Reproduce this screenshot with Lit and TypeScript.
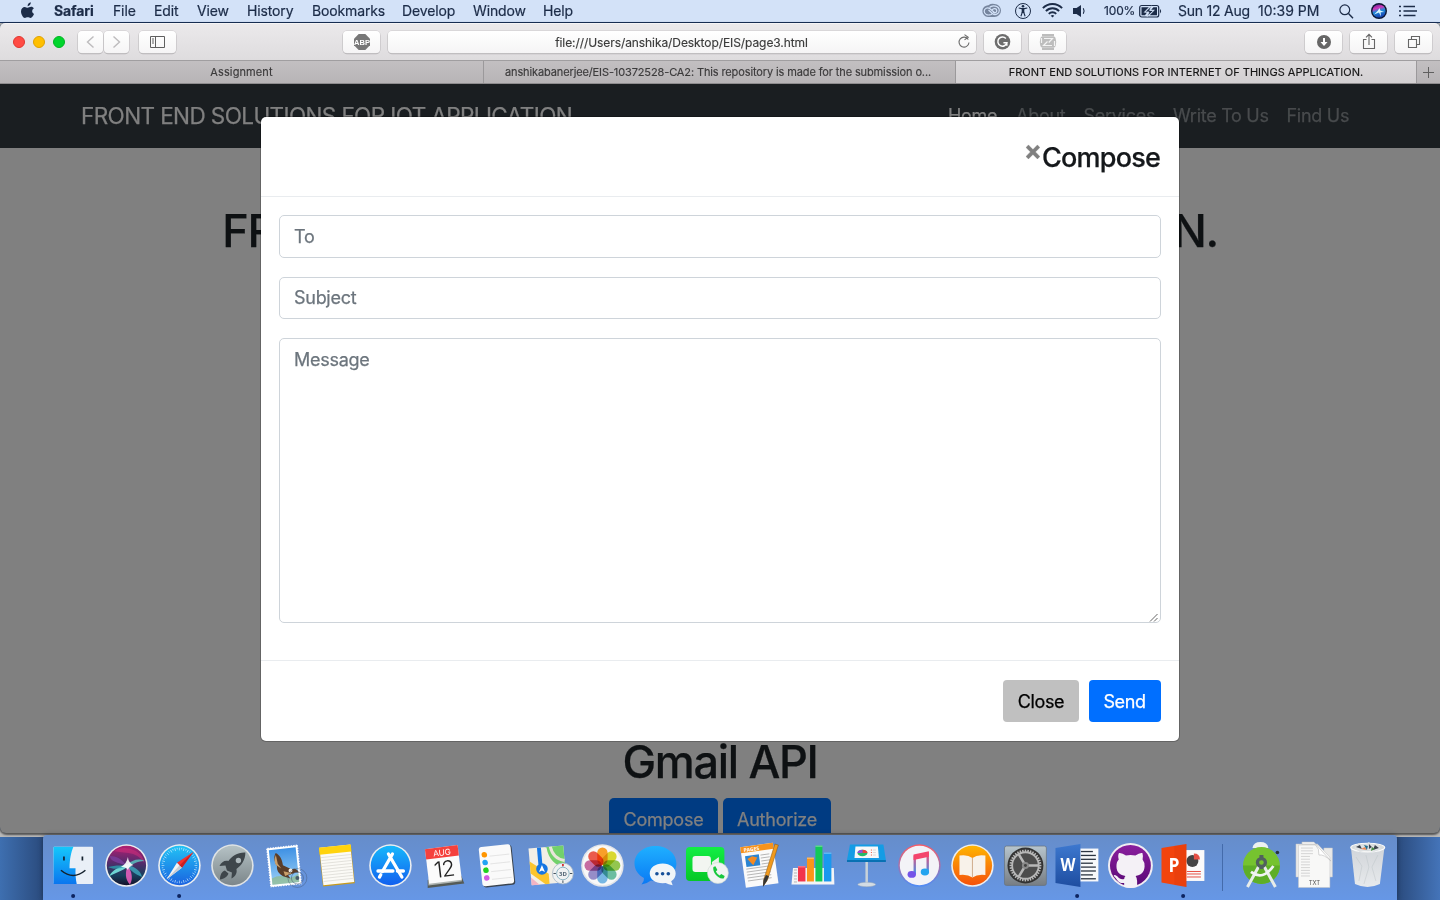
import { LitElement, html, svg, css } from "lit";
import { customElement } from "lit/decorators.js";

const range = (n: number) => Array.from({ length: n }, (_, i) => i);

@customElement("mac-menubar")
class MacMenubar extends LitElement {
  static styles = css`
    :host { display: block; }
    .bar {
      display: grid; height: 22px; box-sizing: content-box;
      grid-template-columns: 54px 59px 41px 43px 50px 65px 90px 71px 70px 439px 32px 28px 30px 32px 35px 39px 80px 80px 32px 28px 1fr;
      background: #d3e2f8; border-bottom: 1px solid #1b3560;
      font: 14px/22px Inter, sans-serif; color: #1c2c48; white-space: nowrap; letter-spacing: -0.14px;
      -webkit-text-stroke: 0.2px #1c2c48;
    }
    .app { font-weight: 700; letter-spacing: -0.1px; }
    .pct { font-size: 12px; letter-spacing: -0.15px; }
    .date { letter-spacing: -0.22px; }
    .time { letter-spacing: 0; }
    svg { display: block; height: 22px; }
  `;
  render() {
    return html`<div class="bar">
      <svg width="54" viewBox="0 0 54 22"><path fill="#1c2c48" d="M27.6 6.2c-.1-2 1.400-3.700 3.200-3.900.2 2-1.500 3.900-3.200 3.900zM34 13.900c-.6 1.500-2 4-3.500 4-1 0-1.500-.7-2.800-.7s-1.800.7-2.800.7c-1.700 0-3.900-3.700-3.900-6.500 0-3 1.900-4.500 3.700-4.500 1.200 0 2.100.8 3 .8.8 0 2-.9 3.400-.9 1.200 0 2.200.6 2.800 1.500-2.400 1.500-2.200 4.500.1 5.600z"/></svg>
      <span class="app">Safari</span><span>File</span><span>Edit</span><span>View</span><span>History</span>
      <span>Bookmarks</span><span>Develop</span><span>Window</span><span>Help</span>
      <svg width="32" viewBox="0 0 32 22"><path d="M6.500 5.200A7 7 0 0 1 12.500 4a6.500 6.500 0 0 1 0 13H6A5.900 5.900 0 0 1 6.500 5.200z" fill="#76859e"/><g fill="none" stroke="#d3e2f8" stroke-width="1.200"><path d="M10.500 13.500l-1.300 1c-4 1.400-7-.3-7-3.200s3.300-4.300 5.800-2.600l5 4.300"/><path d="M7.500 7.500c3-3.200 9.800-1.500 9.800 3 0 3.500-4.300 5.300-6.800 3L6.500 10"/><path d="M9.800 10.300c1.800-2.600 5-1.800 5 .5 0 2-2.300 2.600-3.600 1.200"/></g></svg>
      <svg width="28" viewBox="0 0 28 22"><circle cx="9" cy="11" r="7.500" fill="none" stroke="#1c2c48" stroke-width="1"/><circle cx="9" cy="6.300" r="1.300" fill="#1c2c48"/><path d="M4.700 8l3 .6h2.600l3-.6M8.400 12l-1.500 4.200M9.600 12l1.500 4.200" stroke="#1c2c48" stroke-width="1.100" fill="none"/><path d="M7.700 8.200h2.600V13H7.700z" fill="#1c2c48"/></svg>
      <svg width="30" viewBox="0 0 30 22"><g fill="none" stroke="#1c2c48" stroke-width="1.900"><path d="M.9 8.200a13 13 0 0 1 19.200 0M3.900 11.200a9 9 0 0 1 13.200 0M6.800 13.900a5 5 0 0 1 7.400 0"/></g><path fill="#1c2c48" d="M10.500 17.600l-1.800-1.800a2.600 2.600 0 0 1 3.600 0z"/></svg>
      <svg width="32" viewBox="0 0 32 22"><path fill="#1c2c48" d="M1 8h3.500L9 5v12l-4.500-3H1z"/><path d="M11.300 8.200q1.600 2.800 0 5.600" fill="none" stroke="#1c2c48" stroke-width="1.100"/></svg>
      <span class="pct">100%</span>
      <svg width="39" viewBox="0 0 39 22"><rect x=".7" y="5.500" width="19" height="11.500" rx="2" fill="none" stroke="#1c2c48" stroke-width="1.200"/><path d="M2.500 7.200h7.300l-5.300 5.300h3.500L6 15.300H2.500zM18 15.300h-7.300l5.300-5.500h-3.800l2.200-2.600H18z" fill="#1c2c48"/><path d="M12.500 6l-6.500 6h4l-2 4.500 6.700-6h-4z" fill="#1c2c48" stroke="#d3e2f8" stroke-width=".8"/><path d="M21 9q2.200 2 0 4.500z" fill="#1c2c48"/></svg>
      <span class="date">Sun 12 Aug</span><span class="time">10:39 PM</span>
      <svg width="32" viewBox="0 0 32 22"><circle cx="6.800" cy="9.800" r="4.900" fill="none" stroke="#1c2c48" stroke-width="1.200"/><path d="M10.500 13.500l4.500 4.700" stroke="#1c2c48" stroke-width="1.400"/></svg>
      <svg width="28" viewBox="0 0 28 22"><defs><linearGradient id="ms" x2="0.300" y2="1"><stop stop-color="#43208e"/><stop offset=".35" stop-color="#d136b8"/><stop offset=".6" stop-color="#1d8bd8"/><stop offset="1" stop-color="#1747b5"/></linearGradient></defs><circle cx="9" cy="11" r="8" fill="#0b1530"/><circle cx="9" cy="11" r="6.600" fill="url(#ms)"/><path d="M9.500 8l.8 2.500 4 1.500-3.700.2.400 4.300-2-4L4 14.500l3.800-3.700z" fill="#d9f6ff"/></svg>
      <svg width="40" viewBox="0 0 40 22"><path d="M1 6.500h2M1 11h2M1 15.500h2M5.500 6.500h11.500M5.500 11H19M5.500 15.500h12" stroke="#1c2c48" stroke-width="1.600"/></svg>
    </div>`;
  }
}

@customElement("safari-chrome")
class SafariChrome extends LitElement {
  static styles = css`
    :host { display: block; }
    .toolbar { display: flex; height: 37px; box-sizing: border-box; padding: 7px 8px 0 13px; border-top: 1px solid #f5f4f5; border-radius: 5px 5px 0 0;
      background: linear-gradient(#ebe9eb, #dedcde); }
    .lights { display: flex; gap: 8px; padding-top: 5px; width: 65px; box-sizing: border-box; }
    .light { width: 12px; height: 12px; border-radius: 50%; box-sizing: border-box; }
    .red { background: #ff4b44; border: 1px solid #e0362f; }
    .yellow { background: #ffbf00; border: 1px solid #e0a200; }
    .green { background: #00d52c; border: 1px solid #00b423; }
    .btn { width: 37px; height: 22px; border-radius: 4px; background: linear-gradient(#fff, #f5f4f5); box-shadow: 0 0 0 .6px #c9c7c9, 0 1px 0 .3px #b7b5b7; margin-right: 8px; flex: none; }
    .btn svg { display: block; width: 37px; height: 22px; }
    .half, .half svg { width: 25px; }
    .half { margin-right: 1px; }
    .fwd { margin-right: 10px; }
    .side { margin-right: 167px; }
    .z { margin-right: auto; }
    .last { margin-right: 0; }
    .address { display: flex; width: 588px; text-align: center; font: 12px/23px Inter, sans-serif; color: #3b3b3b; letter-spacing: -0.08px; -webkit-text-stroke: 0.15px #3b3b3b; }
    .url { flex: 1; padding-right: 1px; }
    .address svg { width: 24px; height: 22px; margin-left: -24px; }
    .abp { font: 700 7.500px "Liberation Sans", sans-serif; }
    .tabs { display: grid; grid-template-columns: 484px 472px 461px 23px; height: 24px; box-sizing: border-box; border-top: 1px solid #a09ea0; border-bottom: 1px solid #8e8c8e;
      background: linear-gradient(#c2bfc1, #b7b4b6); font: 11px/22px Inter, sans-serif; color: #3c3b3c; text-align: center; white-space: nowrap; -webkit-text-stroke: 0.15px currentColor; }
    .tab { border-right: 1px solid #9b999b; box-sizing: border-box; letter-spacing: .1px; }
    .t2 { letter-spacing: -0.12px; padding-right: 3px; }
    .active { background: linear-gradient(#dcdadc, #d3d0d2); color: #161616; letter-spacing: .02px; }
    .plus { display: block; }
  `;
  render() {
    return html`
      <div class="toolbar">
        <div class="lights"><div class="light red"></div><div class="light yellow"></div><div class="light green"></div></div>
        <div class="btn half"><svg viewBox="0 0 25 22"><path d="M15.500 5.500L9.500 11l6 5.500" fill="none" stroke="#bdbbbd" stroke-width="1.400"/></svg></div>
        <div class="btn half fwd"><svg viewBox="0 0 25 22"><path d="M9.500 5.500l6 5.500-6 5.500" fill="none" stroke="#bdbbbd" stroke-width="1.400"/></svg></div>
        <div class="btn side"><svg viewBox="0 0 37 22"><path d="M11.500 5.500h14v11h-14zM16.500 5.500v11M13 8h2M13 10h2M13 12h2" fill="none" stroke="#5f5f5f" stroke-width="1"/></svg></div>
        <div class="btn"><svg viewBox="0 0 37 22"><path d="M15.700 3h6.600l4.700 4.700v6.600L22.300 19h-6.600L11 14.300V7.700z" fill="#777"/><text class="abp" x="19" y="13.700" text-anchor="middle" fill="#fff">ABP</text></svg></div>
        <div class="btn address"><span class="url">file:///Users/anshika/Desktop/EIS/page3.html</span><svg viewBox="0 0 24 22"><path d="M16.300 8.500A5 5 0 1 0 17 11.500M12.500 3.600l3.700 2.700-3.700 2.600" fill="none" stroke="#6b6b6b" stroke-width="1.100"/></svg></div>
        <div class="btn"><svg viewBox="0 0 37 22"><circle cx="18.500" cy="10.800" r="7.800" fill="#6d6d6d"/><path d="M21.900 7.500a4.600 4.600 0 1 0 1 4.200h-3.500M22.800 11.500v3.300" fill="none" stroke="#fff" stroke-width="1.500"/></svg></div>
        <div class="btn z"><svg viewBox="0 0 37 22"><path d="M13 3h12v3h-12zM13 16h12v3h-12zM12 5.800q-2.400 5.200 0 10.500h14q2.400-5.200 0-10.500z" fill="#bdbdbd"/><path d="M15 7.500h8.500l-3.800 4M23 14.500h-8.500l4-4M12.500 7v5M25.500 10v5" fill="none" stroke="#f3f3f3" stroke-width="1.200"/></svg></div>
        <div class="btn"><svg viewBox="0 0 37 22"><circle cx="19" cy="11" r="7" fill="#666"/><path d="M19 7v5" stroke="#fff" stroke-width="2"/><path d="M15.500 11h7L19 15z" fill="#fff"/></svg></div>
        <div class="btn"><svg viewBox="0 0 37 22"><path d="M16.500 8.500h-3v9h11v-9h-3M19 14V3.500M16 6.300l3-3 3 3" fill="none" stroke="#666" stroke-width="1.100"/></svg></div>
        <div class="btn last"><svg viewBox="0 0 37 22"><path d="M13.500 8.500h8v8h-8zM16.500 8V5.500h8v8H22" fill="none" stroke="#666" stroke-width="1.100"/></svg></div>
      </div>
      <div class="tabs">
        <div class="tab">Assignment</div>
        <div class="tab t2">anshikabanerjee/EIS-10372528-CA2: This repository is made for the submission o...</div>
        <div class="tab active">FRONT END SOLUTIONS FOR INTERNET OF THINGS APPLICATION.</div>
        <svg class="plus" width="23" height="22" viewBox="0 0 23 22"><path d="M11.500 6v11M6 11.500h11" stroke="#5f5f5f" stroke-width="1"/></svg>
      </div>`;
  }
}

@customElement("compose-page")
class ComposePage extends LitElement {
  static styles = css`
    :host { display: block; position: relative; height: 749px; overflow: hidden; background: #808080; border-radius: 0 0 6px 6px; font: 18px/27px Inter, sans-serif; -webkit-text-stroke: 0.25px currentColor; }
    .page { display: flex; flex-direction: column; align-items: center; }
    .nav { display: flex; align-items: center; width: 100%; box-sizing: border-box; height: 64px; padding: 0 91px 2px 81px; background: #1a1e21; white-space: nowrap; color: #484b4d; }
    .brand { font-size: 22.500px; color: #808080; letter-spacing: -0.6px; margin-right: auto; }
    .links { display: grid; grid-template-columns: 68px 67.500px 89.500px 113.500px 62.500px; letter-spacing: -0.28px; }
    .home { color: #808080; }
    .title { margin: 56px 0 0; font: 500 45px/54px Inter, sans-serif; color: #0e1113; white-space: nowrap; letter-spacing: -1.230px; }
    .api { margin: 477px 0 0; font: 500 45px/54px Inter, sans-serif; color: #0e1113; letter-spacing: -1.300px; }
    .actions { display: flex; gap: 5px; padding-top: 9px; }
    .dim { width: 109px; height: 43px; line-height: 43px; border-radius: 5px; background: #003b82; color: #808080; text-align: center; letter-spacing: -0.2px; }
    .dim.b { width: 108px; }
    .modal { position: absolute; left: 261px; top: 33px; width: 918px; height: 624px; box-sizing: border-box; background: #fff; border-radius: 5px; box-shadow: 0 0 0 1px rgba(0,0,0,.22); display: flex; flex-direction: column; }
    .head { height: 80px; box-sizing: border-box; border-bottom: 1px solid #e9ecef; padding: 0 19px; display: flex; justify-content: flex-end; }
    .x { font: 700 27px/27px Inter, sans-serif; color: #808080; padding-top: 20px; }
    .h { font: 500 27px/40px Inter, sans-serif; color: #15181b; padding-top: 21px; letter-spacing: -0.8px; }
    .body { flex: 1; padding: 18px 18px 0; display: flex; flex-direction: column; color: #6c757d; letter-spacing: -0.28px; }
    .field { height: 43px; box-sizing: border-box; border: 1px solid #ced4da; border-radius: 5px; padding: 0 14px; line-height: 41px; margin-bottom: 19px; }
    .subject { height: 42px; line-height: 39px; }
    .area { height: 285px; display: flex; justify-content: space-between; align-items: flex-end; padding-right: 1px; }
    .area span { align-self: flex-start; }
    .foot { height: 81px; box-sizing: border-box; border-top: 1px solid #e9ecef; padding: 19px 18px 0; display: flex; justify-content: flex-end; gap: 10px; letter-spacing: -0.4px; }
    .b1, .b2 { height: 42px; line-height: 43.500px; border-radius: 4px; text-align: center; }
    .b1 { width: 76px; background: #c0c0c0; color: #000; }
    .b2 { width: 71px; padding-right: 1px; background: #006fff; color: #fff; }
  `;
  render() {
    return html`
      <div class="page">
        <div class="nav"><span class="brand">FRONT END SOLUTIONS FOR IOT APPLICATION</span>
          <div class="links"><span class="home">Home</span><span>About</span><span>Services</span><span>Write To Us</span><span>Find Us</span></div></div>
        <h1 class="title">FRONT END SOLUTIONS FOR IOT APPLICATION.</h1>
        <h1 class="api">Gmail API</h1>
        <div class="actions"><div class="dim">Compose</div><div class="dim b">Authorize</div></div>
      </div>
      <div class="modal">
        <div class="head"><span class="x">×</span><span class="h">Compose</span></div>
        <div class="body">
          <div class="field">To</div>
          <div class="field subject">Subject</div>
          <div class="field area"><span>Message</span><svg width="10" height="10" viewBox="0 0 10 10"><path d="M1 9.500L8.500 2M5 9.500l3.500-3.500" stroke="#555" stroke-width=".9"/></svg></div>
        </div>
        <div class="foot"><div class="b1">Close</div><div class="b2">Send</div></div>
      </div>`;
  }
}

const disc = (fill: string, ring = "#eceef0") => svg`<circle cx="26.500" cy="29.500" r="21.300" fill=${ring}/><circle cx="26.500" cy="29.500" r="19.700" fill=${fill}/>`;

const finder = svg`<rect x="6.500" y="10.700" width="39.700" height="37.300" rx="1" fill="#e9eff7"/><path d="M6.500 10.700h20c-2.500 6-3.700 12-3.900 21.500h6c-.2 6 .2 10.800 1.200 15.800H6.500z" fill="url(#gFinder)"/><path d="M17 20.500v4M35.500 20.500v4" stroke="#14212e" stroke-width="1.700"/><path d="M14 34.300q12.300 10.500 24.500 0" fill="none" stroke="#14212e" stroke-width="1.500"/>`;
const siri = svg`${disc("url(#gSiri)")}<path d="M14 15q10-6 22 0 8 5 8.500 12-6-9-16-10t-14.500-2z" fill="#e0317f" opacity=".45"/><path d="M27 30C22 23 16 20 10 20c0 6 8 6 17 10z" fill="#7b3f9d" opacity=".8"/><path d="M27 29c5-5 12-7 17.500-4-6 0-11 3-17.500 6z" fill="#59d3c8" opacity=".75"/><path d="M26.500 28C20 31 12 34 9.500 40c7-3 12-5 18-9z" fill="#7af1e8" opacity=".85"/><path d="M27 30c-8-1-14 0-19 1 6 3 12 2 19-1z" fill="#2b9fae" opacity=".8"/><path d="M28 29c3 6 6 13 2 19.500-5-5-5-12-2-19.500z" fill="#f05fc0" opacity=".85"/><path d="M28 29c7 2 13 6 14 12-7-3-11-6-15-11z" fill="#3fb2c4" opacity=".75"/><path d="M28 21q.5 6 5.500 8-4.500 1.500-5.500 5-2-3.500-7-3 5.500-2.500 7-10z" fill="#fff" opacity=".9"/>`;
const safari = svg`${disc("url(#gSafari)")}${range(48).map(i => svg`<path d="M26.500 11.600v${i % 2 ? 1.6 : 2.8}" stroke="#d9f2ff" stroke-width=".6" transform="rotate(${i * 7.5} 26.5 29.5)"/>`)}<path d="M40.500 16L24 26.800l5 5z" fill="#f5312c"/><path d="M13.500 43.500L24 26.800l5 5z" fill="#f3f3f3"/><path d="M40.500 16l-14 13.400 2.500 2.400z" fill="#c71f22"/><path d="M13.500 43.500l13-14.100 2.500 2.400z" fill="#c6ccd4"/>`;
const rocket = svg`${disc("url(#gRocket)", "#dfe3e5")}<path d="M39.500 16.500c-8-.3-13.500 3.500-17 8.500-4-1-7 1-9 5l6-.5 1.500 5 5 2-.5 6c4-2 6-5.500 5-9.500 5-3.500 9-9 9-16.500z" fill="#3e464b"/><circle cx="32.500" cy="24.500" r="2.700" fill="#aeb9bd"/><path d="M19 34.500c-3.500 1-5 5-5 9 4-.5 7.500-2.500 8.500-6z" fill="#3e464b"/>`;
const mail = svg`<g transform="rotate(-6 26 29)"><rect x="9" y="10" width="32" height="40" fill="#fff"/><rect x="9" y="10" width="32" height="40" fill="none" stroke="#6490d6" stroke-width="1.300" stroke-dasharray="1.300 1.300"/><rect x="11.500" y="12.500" width="27" height="35" fill="url(#gMail)"/><path d="M11.500 41q8-3 14 0t13-2v8.500h-27z" fill="#93b977" opacity=".6"/><path d="M18 16c4 2 6 8 6 13l8 5c3-1 6 0 7 4-6-1-8 2-11 1l2 4-7-3c-4-3-6-6-5-11-2-4-3-9 0-13z" fill="#5a3d28"/><path d="M18 18l1 9 3 5-5-4q-2-5 1-10zM24 35l8 3-7 2z" fill="#c9a06c"/><circle cx="31" cy="35" r="2" fill="#f3eee5"/></g><circle cx="38.500" cy="42" r="9.500" fill="none" stroke="#40536f" stroke-width=".8" opacity=".5"/><circle cx="38.500" cy="42" r="6" fill="none" stroke="#40536f" opacity=".5"/><circle cx="38.500" cy="42" r="2" fill="#33445c" opacity=".8"/>`;
const notes = svg`<g transform="rotate(-6 26 30)"><rect x="10" y="10" width="32" height="39" fill="#c79b1d"/><rect x="10.500" y="10" width="31" height="37.800" fill="#fbfaf6"/><path d="M10 10h32v7H10z" fill="#ffd30d"/>${range(9).map(i => svg`<path d="M11 ${20 + i * 3}h30" stroke="#d3d2cb" stroke-width=".6"/>`)}</g>`;
const store = svg`${disc("url(#gStore)")}<g stroke="#fff" stroke-width="3.300" stroke-linecap="round"><path d="M28.500 18L18.500 35.500M24.500 18l13.500 23"/><path d="M14 35h15M33.500 35h6M16.800 38.800l-1.300 2.300"/></g>`;
const calendar = svg`<g transform="rotate(-7 26 29)"><path d="M9 42h34l2 8H8z" fill="#555b57"/><path d="M10 40h32l1 7.500H9z" fill="#aeb4b1"/><rect x="10" y="11" width="33" height="35" fill="#fbfbfb"/><path d="M10 11h33v10.500H10z" fill="#f5413d"/><text class="cal" x="26.500" y="19.500" font-size="8.300" fill="#fff" text-anchor="middle">AUG</text><text class="cal" x="26.500" y="41" font-size="22" font-weight="300" fill="#222" text-anchor="middle" letter-spacing="-1">12</text></g>`;
const reminders = svg`<g transform="rotate(-6 26 29)"><rect x="11.500" y="10.500" width="32" height="40" rx="3" fill="#3a4450"/><rect x="10.500" y="9.500" width="32" height="39.500" rx="3" fill="#fafafa"/>${["#ff9500", "#1fa3f5", "#1fd11f", "#d35be3"].map((c, i) => svg`<circle cx="15.500" cy=${17.5 + i * 7.8} r="2.800" fill=${c}/><path d="M20.500 ${19.500 + i * 7.8}h20" stroke="#d7d7d7" stroke-width=".6"/>`)}</g>`;
const maps = svg`<g transform="rotate(-5 24 29)"><rect x="7" y="11" width="35" height="37" fill="#f2efe6"/><path d="M20 11h22v22c-9-2-16-9-17-22z" fill="#72d16b"/><path d="M29 11c1 8 5 13 13 15" fill="none" stroke="#e9e5da" stroke-width="3"/><path d="M7 24l18 14v10h-4L7 36z" fill="#fbc52d"/><path d="M7 40l8 8H7z" fill="#f3b4c4"/><path d="M17.500 11v17" stroke="#1678e6" stroke-width="4"/></g><circle cx="19" cy="33" r="5.800" fill="#1676e2"/><path d="M19 29l3 7-3-1.500-3 1.500z" fill="#fff"/><circle cx="40" cy="37.500" r="10.500" fill="#eff1f2" stroke="#a6b6c5" stroke-width=".8"/><circle cx="40" cy="37.500" r="6.300" fill="none" stroke="#8fb6c4"/><text class="bold" x="40" y="39.800" font-size="6" fill="#526574" text-anchor="middle">3D</text><path d="M40 28v2.500M40 44.500V47M30.500 37.500H33M47 37.500h2.500" stroke="#41505b"/><circle cx="40" cy="29" r="1" fill="#e22"/>`;
const photos = svg`${disc("#f8f8f8", "#e3e5e8")}<g class="mul">${["#ff9a13", "#ddda1b", "#8cc63e", "#61bd9b", "#6cb5e8", "#8f85c9", "#c65f9c", "#f04b3b"].map((c, i) => svg`<rect x="21.300" y="11.500" width="10.400" height="17.500" rx="5.200" fill=${c} fill-opacity=".9" transform="rotate(${i * 45} 26.5 29.5)"/>`)}</g>`;
const messages = svg`<path d="M26.500 10c11.800 0 21 7.500 21 17.500s-9.200 17.500-21 17.500l-4.500-.4q-4.500 3.500-9.500 4 3-3 2.500-6.500C9.500 39 5.500 34 5.500 27.500 5.500 17.500 14.700 10 26.500 10z" fill="url(#gBlue)"/><path d="M33.800 27.500c7.500 0 13 4.200 13 10 0 3.200-1.700 6-4.500 7.700l1.500 4q-4.500-.6-7-2.200l-3 .3c-7.500 0-13-4-13-9.800s5.500-10 13-10z" fill="#f2f5f8"/><g fill="#174f98"><circle cx="28" cy="37.800" r="1.800"/><circle cx="33.700" cy="37.800" r="1.800"/><circle cx="39.400" cy="37.800" r="1.800"/></g>`;
const facetime = svg`<rect x="5" y="11" width="38.500" height="34" rx="4" fill="url(#gGreen)"/><rect x="11.500" y="20" width="18.500" height="16" rx="3" fill="#f2f5f1"/><path d="M31 26l7-5v12l-7-2z" fill="#e9f2e8"/><circle cx="37" cy="37" r="10.500" fill="#f1f4f2" stroke="#cdd8d0" stroke-width=".6"/><path d="M32.500 31l2-.8 2 3.800-1.500 1.500q1.500 3 3.800 4l1.500-1.600 3.500 2-.8 2.300c-5 2-12-6-10.500-11.200z" fill="#19c83d"/>`;
const pages = svg`<g transform="rotate(-8 24 30)"><rect x="9" y="9" width="33" height="41" fill="#fafafa"/><path d="M9 9h33v6H9z" fill="#f7931d"/><text class="bold" x="12" y="14.200" font-size="5" fill="#fff">PAGES</text><rect x="12.500" y="18.500" width="14" height="11" fill="#2a84d2"/><path d="M14.500 21.500l5-2 5 2-5 7z" fill="#f48a22"/>${range(9).map(i => svg`<path d="M${i < 4 ? 28 : 12} ${19.5 + i * 3}h${i < 4 ? 9 : 24}" stroke="#aaa" stroke-width=".8"/>`)}</g><path d="M41 8l3.500 1-11 35-4 6 .5-7z" fill="#f19a1d" stroke="#875310" stroke-width=".5"/><path d="M32 39l3 1-2 5-4 6 .5-7z" fill="#343434"/>`;
const numbers = svg`<path d="M6 32h41l.5 16.500h-43z" fill="#f4f4f5"/>${range(5).map(i => svg`<path d="M7 ${34 + i * 3}h3" stroke="#999" stroke-width=".7"/>`)}<rect x="11" y="30" width="7.500" height="15.500" fill="#f2344b"/><rect x="20" y="21.500" width="7" height="24" fill="#fb9519"/><rect x="28.500" y="9.500" width="7" height="36" fill="#13c956"/><rect x="37" y="16.500" width="7.500" height="29" fill="#1998ee"/><path d="M11 30h7.500v1.500H11zM20 21.500h7V23h-7zM28.500 9.500h7V11h-7zM37 16.500h7.500V18H37z" fill="#fff" opacity=".3"/>`;
const keynote = svg`<path d="M25.500 25h2.500v23h-2.500z" fill="#c8d2d9"/><ellipse cx="26.800" cy="48.500" rx="9" ry="2.200" fill="#d3dce4" stroke="#9babb8" stroke-width=".5"/><path d="M10 8.500h33.500L46 24H7z" fill="#149ce5"/><path d="M7 24h39v2H7z" fill="#0871b3"/><path d="M15.500 10.500h22.500l1 11.500H14.500z" fill="#f8f8f8"/><ellipse cx="22.500" cy="17" rx="5" ry="3.300" fill="#25b96a"/><path d="M22.500 17v-3.300q5 .2 5 3.300z" fill="#ed4141"/><path d="M22.500 17h-5q0-3 5-3.300z" fill="#934fdc"/><path d="M31 14h1M31 16.500h1M31 19h1" stroke="#e95b45"/><path d="M33 14h3M33 16.500h3M33 19h3" stroke="#ccc" stroke-width=".7"/>`;
const itunes = svg`${disc("#f3f3f7", "url(#gTunes)")}<path d="M21.800 38.500V20.500l13-3v18.500" fill="none" stroke="url(#gNote)" stroke-width="2.400"/><path d="M20.600 18.500l15.400-3.300v5.600l-15.400 3.300z" fill="#f4456c"/><ellipse cx="18.800" cy="38.500" rx="4.200" ry="3.400" fill="#7554e8"/><ellipse cx="32" cy="36" rx="4.200" ry="3.400" fill="#24a4ef"/>`;
const books = svg`${disc("url(#gBooks)")}<path d="M26.500 22q-5-4-13-2.500V39q8-1 13 2.500 5-3.500 13-2.500V19.500q-8-1.500-13 2.500z" fill="#f8f2ea"/><path d="M26.500 22v19" stroke="#cfac8c" stroke-width="1"/>`;
const settings = svg`<rect x="5.500" y="10" width="42" height="39.500" rx="2" fill="url(#gMetal)" stroke="#66727c" stroke-width=".7"/><circle cx="26.500" cy="29.500" r="18" fill="#333"/>${range(36).map(i => svg`<rect x="25.800" y="13.500" width="1.500" height="4" fill="#bbb" transform="rotate(${i * 10} 26.5 29.5)"/>`)}<circle cx="26.500" cy="29.500" r="13.300" fill="#4d4d4d" stroke="#b6b6b6" stroke-width="1.800"/><g stroke="#b8b8b8" stroke-width="2.500"><path d="M26.500 29.500h13M26.500 29.500L20 18.500M26.500 29.500L20 40.500"/></g><circle cx="26.500" cy="29.500" r="3.500" fill="#8a8a8a"/><circle cx="26.500" cy="29.500" r="1.500" fill="#444"/>`;
const word = svg`<path d="M28 12.500h19.500v33H28z" fill="#f7f8fa"/>${range(8).map(i => svg`<path d="M30 ${15.5 + i * 3.9}h${i % 3 ? 15 : 12}" stroke="#2c3542" stroke-width="1.300"/>`)}<path d="M4.500 12l25-4v43l-25-4z" fill="url(#gWord)"/><text class="bold" x="17" y="35.500" font-size="18" fill="#fff" text-anchor="middle" textLength="15" lengthAdjust="spacingAndGlyphs">W</text>`;
const github = svg`<circle cx="26.500" cy="29.500" r="22.500" fill="#f0edf2"/><circle cx="26.500" cy="29.500" r="20.500" fill="url(#gHub)"/><path d="M15 17q3-.5 7 2.500 4.500-1 9.500 0 4-3 7-2.500 1 3 .2 6.500 2.300 3 2 7c-.3 6-4 8.800-9 9.500q1.500 2 1.500 5v6q-6.500 2-13 0v-4c-6 1-7-4-9.500-6-1-1-1.500-2 0-2 3 0 4 5.500 9.500 4q.2-2 1.300-3c-5-.8-9-3.500-9-9.500 0-3 .5-5 2.300-7-.7-2.500-.8-4.500.2-6.500z" fill="#f4f1f6"/>`;
const powerpoint = svg`<path d="M26 14h21.500v31H26z" fill="#fafafa"/><circle cx="35.500" cy="25" r="6" fill="#444"/><path d="M37 23.500v-6q6 0 6 6z" fill="#e65045"/><path d="M30 35.500h14M30 38h14M30 41h14" stroke="#e65045" stroke-width="1"/><path d="M4.500 12l25-4v43l-25-4.500z" fill="#f2440d"/><path d="M29.500 8v43l-12-2V10z" fill="#c9330a" opacity=".18"/><text class="bold" x="17" y="36.500" font-size="20" fill="#fff" text-anchor="middle" textLength="11" lengthAdjust="spacingAndGlyphs">P</text>`;
const studio = svg`<path d="M17.500 12q1-6 8-6t8 6z" fill="#edf1ef"/><circle cx="26.500" cy="29.500" r="18.500" fill="#76c32f"/><path d="M8 29.500a18.500 18.500 0 0 0 37 0z" fill="#5eae27"/><path d="M24 30L12.500 51M29 30l11.500 21" stroke="#e8ece9" stroke-width="3"/><path d="M16 36q12 9 22.500-6" fill="none" stroke="#f2f4f3" stroke-width="2.800"/><circle cx="26.500" cy="26.500" r="4" fill="none" stroke="#51615d" stroke-width="3.300"/><path d="M26.500 19v4M26.500 30v3" stroke="#51615d" stroke-width="4"/><circle cx="42.500" cy="16.500" r="1.800" fill="#26343e"/>`;
const docs = svg`<path d="M8 8h22v33H8zM36 12h8.500v29H36z" fill="#e9e9e8" stroke="#c8c8c8" stroke-width=".5"/><path d="M10.500 9h20L42 21v30.500H10.500z" fill="#f8f8f7" stroke="#c5c5c5" stroke-width=".5"/><path d="M14 6h12l17 19q-7-7-12-6 1-6-4-11H14z" fill="#fff" stroke="#bbb" stroke-width=".6"/>${range(11).map(i => svg`<path d="M13 ${12 + i * 2.8}h${i < 3 ? 12 : 9}" stroke="#c4c4c4" stroke-width=".7"/>`)}<text class="cal" x="26.500" y="49.500" font-size="6" fill="#555" text-anchor="middle">TXT</text>`;
const trash = svg`<path d="M10 12l4 36q12.500 6 25 0l4.500-36z" fill="url(#gTrash)" opacity=".95"/><ellipse cx="26.800" cy="11.500" rx="17" ry="4.300" fill="#d8dcdd" stroke="#fafafa" stroke-width="1.200"/><path d="M13 12l5-5 5 3 5-4 4 4 5-2 3 5-7 3-6-2-8 2z" fill="#dfe2e4"/><path d="M15 11l4-2 2 4zM34 9l4 3-6 2zM28 8l3 3-3 2z" fill="#3c4450"/><path d="M20 13l4-2 2 3z" fill="#e85"/><path d="M23 9l4 1-1 4z" fill="#246f8f"/><path d="M31 11l3 2-4 2z" fill="#468b44"/><path d="M15 21l6 9-3 15M25 19l3 12-5 17M37 19l-6 12 4 14" stroke="#b7bdc0" stroke-width="1" fill="none" opacity=".4"/>`;

const apps: { art: unknown; running?: boolean }[] = [
  { art: finder, running: true }, { art: siri }, { art: safari, running: true }, { art: rocket }, { art: mail }, { art: notes },
  { art: store }, { art: calendar }, { art: reminders }, { art: maps }, { art: photos }, { art: messages }, { art: facetime },
  { art: pages }, { art: numbers }, { art: keynote }, { art: itunes }, { art: books }, { art: settings },
  { art: word, running: true }, { art: github }, { art: powerpoint, running: true },
];

const gradient = (id: string, a: string, b: string) => svg`<linearGradient id=${id} x1="0" y1="0" x2="0" y2="1"><stop stop-color=${a}/><stop offset="1" stop-color=${b}/></linearGradient>`;

@customElement("mac-dock")
class MacDock extends LitElement {
  static styles = css`
    :host { display: block; }
    .dock { display: flex; width: 1354px; height: 65px; margin: 0 auto; padding: 1px 0 0 4.100px; box-sizing: border-box; border-radius: 4px 4px 0 0; background: linear-gradient(#668dca, #6697e6); box-shadow: 0 0 5px rgba(0,0,0,.35); }
    .icon { flex: none; width: 52.870px; height: 64px; }
    .sep { flex: none; width: 1px; height: 47px; margin: 8px 12px 0 12px; background: #446bab; }
    .cal { font-family: Inter, sans-serif; }
    .bold { font-family: "Open Sans", sans-serif; font-weight: 700; }
    .mul rect { mix-blend-mode: multiply; }
  `;
  render() {
    const item = (a: { art: unknown; running?: boolean }) => html`<svg class="icon" viewBox="0 0 53 64"><defs>
      ${gradient("gFinder", "#15c7fb", "#0a76ef")}${gradient("gSafari", "#22c3f5", "#1a62e0")}${gradient("gRocket", "#b5c2c5", "#7c868a")}
      ${gradient("gMail", "#3f91e4", "#9bd0f5")}${gradient("gStore", "#16b7fb", "#1260ef")}${gradient("gBlue", "#1fb0ff", "#0a79f4")}
      ${gradient("gGreen", "#12ee45", "#06c726")}${gradient("gTunes", "#fb5a63", "#4d8cf6")}${gradient("gNote", "#f64a71", "#3994ef")}
      ${gradient("gBooks", "#ffb402", "#f5520b")}${gradient("gMetal", "#b7c5cd", "#777d83")}${gradient("gWord", "#3d78cf", "#1e4da0")}
      ${gradient("gHub", "#8a1f9e", "#5a0a76")}${gradient("gTrash", "#d7d9da", "#eeeeec")}
      <linearGradient id="gSiri" x1="0" y1="0" x2="0" y2="1"><stop stop-color="#b01f72"/><stop offset=".4" stop-color="#5a2a6d"/><stop offset=".75" stop-color="#173f5c"/><stop offset="1" stop-color="#15122c"/></linearGradient>
      </defs>${a.art}${a.running ? svg`<circle cx="26.200" cy="60" r="2" fill="#0d2460"/>` : ""}</svg>`;
    return html`<div class="dock">${apps.map(item)}<div class="sep"></div>${[studio, docs, trash].map(art => item({ art }))}</div>`;
  }
}

@customElement("app-root")
class AppRoot extends LitElement {
  static styles = css`
    :host { display: block; width: 1440px; height: 900px; overflow: hidden; background: #23436f; }
    .behind { background: #b9b9b9; height: 814px; }
    .window { background: #23436f; border-radius: 5px 5px 7px 7px; height: 810px; box-shadow: 0 1px 2px 1px rgba(0,0,0,.55); }
    .desk { display: flow-root; background: linear-gradient(90deg, #3e6fb0, #2a4a7c 44px, #2a4a7c 1396px, #4474b9); height: 63px; }
    .lift { margin-top: -2px; position: relative; }
  `;
  render() {
    return html`
      <mac-menubar></mac-menubar>
      <div class="behind"><div class="window"><safari-chrome></safari-chrome><compose-page></compose-page></div></div>
      <div class="desk"><mac-dock class="lift"></mac-dock></div>`;
  }
}
